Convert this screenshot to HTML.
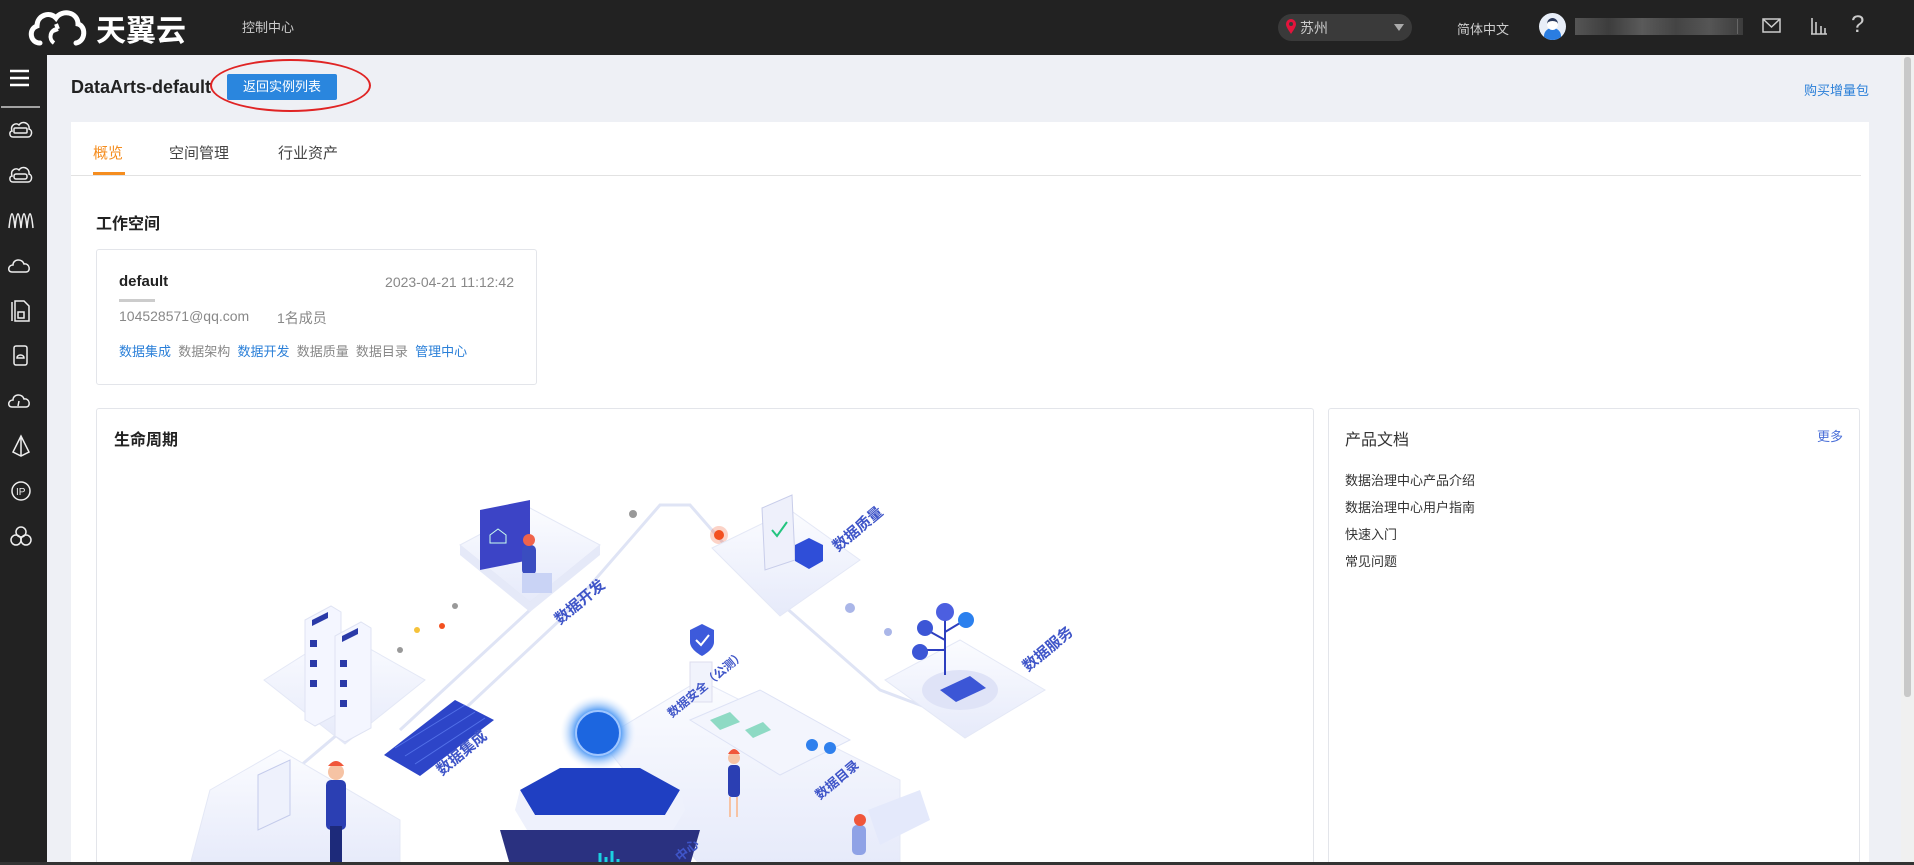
<!DOCTYPE html>
<html><head><meta charset="utf-8">
<style>
*{margin:0;padding:0;box-sizing:border-box}
body{width:1914px;height:865px;overflow:hidden;background:#eef0f5;font-family:"Liberation Sans","Noto Sans CJK SC",sans-serif;position:relative;color:#333}
.hdr{position:absolute;left:0;top:0;width:1914px;height:55px;background:#222}
.side{position:absolute;left:0;top:55px;width:47px;height:810px;background:#222}
.abs{position:absolute}
.panel{position:absolute;left:71px;top:122px;width:1798px;height:740px;background:#fff;overflow:hidden}
.card{position:absolute;border:1px solid #e3e5ea;border-radius:3px;background:#fff}
.lbl{font-family:"Noto Sans CJK SC",sans-serif;fill:#3f55c8;font-size:15px;font-weight:bold}
</style></head><body>
<div class="hdr">
  <svg class="abs" style="left:26px;top:5px" width="160" height="46" viewBox="0 0 160 46">
    <path d="M14 38 C4 38 2 24 11 21 C11 10 24 6 30 13 C36 4 52 7 52 19 C60 21 60 36 50 38" fill="none" stroke="#fff" stroke-width="5" stroke-linecap="round"/>
    <path d="M28 38 C22 34 24 24 32 24 M32 24 l-2 -5 M32 24 l-5 2" fill="none" stroke="#fff" stroke-width="4"/>
    <text x="70" y="36" fill="#fff" font-size="30" font-weight="bold" font-family="Noto Sans CJK SC,sans-serif">天翼云</text>
  </svg>
  <div class="abs" style="left:242px;top:17px;color:#ccc;font-size:13px">控制中心</div>
  <div class="abs" style="left:1278px;top:14px;width:134px;height:27px;border-radius:14px;background:#3a3a3a"></div>
  <svg class="abs" style="left:1285px;top:18px" width="12" height="17" viewBox="0 0 12 17"><path d="M6 16 C2 10 1 8 1 6 A5 5 0 0 1 11 6 C11 8 10 10 6 16Z" fill="#e4143c"/><circle cx="6" cy="6" r="2" fill="#3a3a3a"/></svg>
  <div class="abs" style="left:1300px;top:18px;color:#ccc;font-size:14px">苏州</div>
  <div class="abs" style="left:1394px;top:24px;width:0;height:0;border-left:5px solid transparent;border-right:5px solid transparent;border-top:7px solid #aaa"></div>
  <div class="abs" style="left:1457px;top:19px;color:#ccc;font-size:13px">简体中文</div>
  <div class="abs" style="left:1539px;top:13px;width:27px;height:27px;border-radius:50%;background:#e8eef8;overflow:hidden"><div style="position:absolute;left:5px;top:15px;width:17px;height:14px;border-radius:8px 8px 0 0;background:#2a7de1"></div><div style="position:absolute;left:8px;top:5px;width:11px;height:12px;border-radius:50%;background:#fff;border-top:3px solid #2b3a5c"></div></div>
  <div class="abs" style="left:1575px;top:18px;width:168px;height:17px;background:linear-gradient(90deg,#555,#3d3d3d,#5a5a5a,#444,#555,#3c3c3c)"></div>
  <div class="abs" style="left:1737px;top:19px;width:1px;height:15px;background:#666"></div>
  <svg class="abs" style="left:1762px;top:17px" width="20" height="18"><rect x="1" y="2" width="17" height="13" fill="none" stroke="#ccc" stroke-width="1.5"/><path d="M1 2 L9.5 10 L18 2" fill="none" stroke="#ccc" stroke-width="1.5"/></svg>
  <svg class="abs" style="left:1810px;top:16px" width="18" height="20"><path d="M2 2v16M6 6v12M11 10v8M15 12v6M1 18h16" stroke="#ccc" stroke-width="1.6" fill="none"/></svg>
  <div class="abs" style="left:1851px;top:11px;color:#ccc;font-size:24px">?</div>
</div>
<div class="side">
  <svg width="47" height="520" viewBox="0 0 47 520" fill="none" stroke="#eee" stroke-width="1.5">
    <path d="M10 16h19M10 23h19M10 30h19" stroke="#fff" stroke-width="2.5"/>
    <path d="M1 52h39" stroke="#ccc"/>
    <g transform="translate(0,64)"><path d="M12 12 C10 6 16 3 19 6 C22 1 30 4 29 10 C33 11 32 18 28 18 H13 C9 18 9 12 12 12Z"/><rect x="14" y="9" width="13" height="5" rx="1"/></g>
    <g transform="translate(0,109)"><path d="M12 12 C10 6 16 3 19 6 C22 1 30 4 29 10 C33 11 32 18 28 18 H13 C9 18 9 12 12 12Z"/><rect x="14" y="10" width="13" height="5" rx="2"/></g>
    <g transform="translate(0,154)"><path d="M9 19 C11 0 13 0 15 19 C17 0 19 0 21 19 C23 0 25 0 27 19 C29 0 31 0 33 19"/></g>
    <g transform="translate(0,199)"><path d="M12 18 C7 18 8 11 13 11 C13 5 22 4 24 10 C30 9 31 18 26 18Z"/></g>
    <g transform="translate(0,244)"><path d="M15 2h9l5 5v15H15z M12 3v19"/><rect x="18" y="13" width="6" height="6"/></g>
    <g transform="translate(0,289)"><rect x="14" y="2" width="13" height="19" rx="2"/><path d="M17 14 C17 10 24 10 24 14Z"/></g>
    <g transform="translate(0,334)"><path d="M12 18 C7 18 8 11 13 11 C13 5 22 4 24 10 C30 9 31 18 26 18Z M19 12 L18 17"/></g>
    <g transform="translate(0,379)"><path d="M21 2 L13 18 L21 22 L29 18Z M21 2V22"/></g>
    <g transform="translate(0,424)"><circle cx="21" cy="12" r="9"/><text x="16" y="16" font-size="10" fill="#eee" stroke="none">IP</text></g>
    <g transform="translate(0,469)"><circle cx="21" cy="8" r="5"/><circle cx="16" cy="16" r="5"/><circle cx="26" cy="16" r="5"/></g>
  </svg>
</div>
<div class="abs" style="left:1901px;top:55px;width:13px;height:808px;background:#f0f0f0"><div style="margin:2px 3px;width:7px;height:640px;background:#c8c8c8;border-radius:3px"></div></div>

<div class="abs" style="left:71px;top:77px;font-size:18px;font-weight:bold;color:#222">DataArts-default</div>
<div class="abs" style="left:227px;top:74px;width:110px;height:26px;background:#2a86de;color:#fff;font-size:13px;line-height:26px;text-align:center;border-radius:2px">返回实例列表</div>
<div class="abs" style="left:210px;top:59px;width:161px;height:53px;border:2px solid #e02424;border-radius:50%"></div>
<div class="abs" style="left:1804px;top:80px;color:#2a7fd8;font-size:13px">购买增量包</div>

<div class="panel">
  <div class="abs" style="left:22px;top:20px;font-size:15px;color:#f58d1f">概览</div>
  <div class="abs" style="left:22px;top:50px;width:32px;height:3px;background:#f58d1f"></div>
  <div class="abs" style="left:98px;top:20px;font-size:15px;color:#444">空间管理</div>
  <div class="abs" style="left:207px;top:20px;font-size:15px;color:#444">行业资产</div>
  <div class="abs" style="left:0;top:53px;width:1790px;height:1px;background:#e2e2e2"></div>
  <div class="abs" style="left:25px;top:88px;font-size:16px;font-weight:bold;color:#222">工作空间</div>
  <div class="card" style="left:25px;top:127px;width:441px;height:136px">
    <div class="abs" style="left:22px;top:23px;font-size:15px;font-weight:bold;color:#222">default</div>
    <div class="abs" style="right:22px;top:24px;font-size:14px;color:#888">2023-04-21 11:12:42</div>
    <div class="abs" style="left:22px;top:49px;width:36px;height:3px;background:#ccc"></div>
    <div class="abs" style="left:22px;top:58px;font-size:14px;color:#888">104528571@qq.com</div>
    <div class="abs" style="left:180px;top:58px;font-size:14px;color:#888">1名成员</div>
    <div class="abs" style="left:22px;top:91px;font-size:13px;color:#888;word-spacing:0"><span style="color:#2a7fd8">数据集成</span>&nbsp; 数据架构&nbsp; <span style="color:#2a7fd8">数据开发</span>&nbsp; 数据质量&nbsp; 数据目录&nbsp; <span style="color:#2a7fd8">管理中心</span></div>
  </div>
  <div class="card" style="left:25px;top:286px;width:1218px;height:470px">
    <div class="abs" style="left:17px;top:17px;font-size:16px;font-weight:bold;color:#222">生命周期</div>
  </div>
  <div class="card" style="left:1257px;top:286px;width:532px;height:470px">
    <div class="abs" style="left:16px;top:17px;font-size:16px;color:#333">产品文档</div>
    <div class="abs" style="right:16px;top:17px;font-size:13px;color:#4a6fd8">更多</div>
    <div class="abs" style="left:16px;top:58px;font-size:13px;color:#333;line-height:27px">数据治理中心产品介绍<br>数据治理中心用户指南<br>快速入门<br>常见问题</div>
  </div>
</div>

<svg class="abs" style="left:0;top:0" width="1314" height="862" viewBox="0 0 1314 862">
  <defs>
    <linearGradient id="pl" x1="0" y1="0" x2="0" y2="1"><stop offset="0" stop-color="#fbfcff"/><stop offset="1" stop-color="#e6eafa"/></linearGradient>
    <radialGradient id="gl"><stop offset="0" stop-color="#2c7cf0"/><stop offset=".6" stop-color="#5aa0f5"/><stop offset="1" stop-color="#e6f0ff" stop-opacity="0"/></radialGradient>
  </defs>
  <g stroke="#dfe4f5" stroke-width="3" fill="none">
    <path d="M410 760 L560 620 L660 505 L690 505 L760 585 L880 690 L960 720"/>
    <path d="M400 730 L530 610"/>
    <path d="M260 800 L390 690"/>
  </g>
  <circle cx="633" cy="514" r="4" fill="#999"/><circle cx="719" cy="535" r="5" fill="#f3501f"/><circle cx="719" cy="535" r="9" fill="#f3501f" opacity=".25"/>
  <circle cx="455" cy="606" r="3" fill="#999"/><circle cx="442" cy="626" r="3" fill="#f3501f"/><circle cx="417" cy="630" r="3" fill="#f5c23a"/><circle cx="400" cy="650" r="3" fill="#999"/>
  <circle cx="850" cy="608" r="5" fill="#aab6e8"/><circle cx="888" cy="632" r="4" fill="#aab6e8"/>
  <g fill="url(#pl)" stroke="#e4e8f6">
    <path d="M460 545 L530 508 L600 545 L530 602Z"/>
    <path d="M712 548 L790 510 L860 560 L780 616Z"/>
    <path d="M885 680 L960 640 L1045 690 L965 738Z"/>
    <path d="M264 680 L340 632 L425 680 L345 744Z"/>
    <path d="M600 740 L700 680 L900 780 L900 865 L700 865Z"/>
    <path d="M210 790 L280 750 L400 820 L400 865 L190 865Z"/>
  </g>
  <path d="M460 545 L530 602 L530 612 L460 555Z M530 602 L600 545 L600 555 L530 612Z" fill="#e5e9f8"/>
  <path d="M480 510 L530 500 L530 560 L480 570Z" fill="#3c44c6"/><path d="M490 535 l8-6 l8 6 v8 h-16z" stroke="#cfe" fill="none"/>
  <rect x="522" y="545" width="14" height="30" rx="5" fill="#3a4dc0"/><circle cx="529" cy="540" r="6" fill="#f0634a"/>
  <rect x="522" y="573" width="30" height="20" fill="#c9d3f5"/>
  <path d="M762 508 L792 495 L795 560 L765 570Z" fill="#eef0fb" stroke="#c8cdea"/><path d="M772 530 l5 6 l10 -14" stroke="#23c47f" stroke-width="2" fill="none"/>
  <path d="M795 545 l14 -7 l14 7 v16 l-14 8 l-14-8z" fill="#2f4ed8"/>
  <ellipse cx="960" cy="690" rx="38" ry="20" fill="#dfe3f7"/>
  <path d="M940 690 l30 -14 l16 12 l-30 14z" fill="#3c56d6"/>
  <path d="M945 675 V620 M945 640 l-18 -10 M945 632 l20 -12 M945 650 l-22 0" stroke="#2d3fbf" stroke-width="2" fill="none"/>
  <circle cx="925" cy="628" r="8" fill="#3c56d6"/><circle cx="945" cy="612" r="9" fill="#4c5fe0"/><circle cx="966" cy="620" r="8" fill="#2b80ee"/><circle cx="920" cy="652" r="8" fill="#3c56d6"/>
  <g fill="#f4f6ff" stroke="#dfe3f3">
    <path d="M305 620 l26 -14 l10 6 v100 l-26 14 l-10 -6z"/>
    <path d="M335 636 l26 -14 l10 6 v100 l-26 14 l-10 -6z"/>
  </g>
  <g fill="#2a3aa8"><rect x="310" y="640" width="7" height="7"/><rect x="310" y="660" width="7" height="7"/><rect x="310" y="680" width="7" height="7"/><rect x="340" y="660" width="7" height="7"/><rect x="340" y="680" width="7" height="7"/><rect x="340" y="700" width="7" height="7"/><path d="M312 620 l16 -8 v6 l-16 8z"/><path d="M342 636 l16 -8 v6 l-16 8z"/></g>
  <path d="M384 755 L455 700 L494 720 L420 776Z" fill="#2d45c8"/>
  <path d="M395 748 L465 705 M405 756 L475 712 M415 764 L485 718" stroke="#5270e8" stroke-width="1"/>
  <circle cx="598" cy="733" r="38" fill="url(#gl)"/>
  <circle cx="598" cy="733" r="22" fill="#1c66e0" stroke="#9fc6ff" stroke-width="2"/>
  <path d="M520 790 L560 768 L640 768 L680 790 L665 815 L535 815Z" fill="#1f3fc2"/>
  <path d="M535 815 L665 815 L680 790 L685 810 L670 835 L530 835 L515 810 L520 790Z" fill="#eef1fc"/>
  <path d="M500 830 L700 830 L690 865 L510 865Z" fill="#2a3180"/>
  <path d="M600 865 v-12 M606 865 v-8 M612 865 v-14 M618 865 v-6" stroke="#1bd1e0" stroke-width="3"/>
  <path d="M690 630 l12 -6 l12 6 v12 c0 8 -12 14 -12 14 c0 0 -12 -6 -12 -14z" fill="#3d5adb"/>
  <path d="M696 640 l5 5 l8 -10" stroke="#fff" stroke-width="2" fill="none"/>
  <rect x="690" y="662" width="22" height="40" fill="#f1f3fc" stroke="#dde"/>
  <path d="M690 720 L760 690 L850 740 L780 775Z" fill="#f3f5fd" stroke="#dde2f5"/>
  <path d="M710 720 l20 -8 l10 10 l-20 8z M745 730 l18 -8 l8 8 l-18 8z" fill="#29c08c" opacity=".5"/>
  <circle cx="812" cy="745" r="6" fill="#2f80ed"/><circle cx="830" cy="748" r="6" fill="#2f80ed"/>
  <rect x="326" y="780" width="20" height="50" rx="5" fill="#2b3fb3"/><rect x="330" y="826" width="12" height="39" fill="#1d2a7a"/><circle cx="336" cy="772" r="8" fill="#f6c3a4"/><path d="M328 766 q8 -10 16 0" fill="#f0563a"/>
  <path d="M258 775 L290 760 L290 815 L258 830Z" fill="#eef1fc" stroke="#c4cbeb"/>
  <rect x="728" y="765" width="12" height="32" rx="4" fill="#2b3fb3"/><circle cx="734" cy="758" r="6" fill="#f6c3a4"/><path d="M728 754 q6 -10 12 0" fill="#f0563a"/><path d="M730 797 v20 M737 797 v20" stroke="#f6c3a4" stroke-width="2"/>
  <rect x="852" y="825" width="14" height="30" rx="5" fill="#8fa2e6"/><circle cx="860" cy="820" r="6" fill="#f0563a"/>
  <path d="M868 810 L920 790 L930 820 L880 845Z" fill="#e4e9fb"/>
  <text class="lbl" transform="translate(560 625) rotate(-40)">数据开发</text>
  <text class="lbl" transform="translate(838 552) rotate(-40)">数据质量</text>
  <text class="lbl" transform="translate(1028 672) rotate(-40)">数据服务</text>
  <text class="lbl" transform="translate(442 776) rotate(-40)">数据集成</text>
  <text class="lbl" style="font-size:12px" transform="translate(672 718) rotate(-40)">数据安全（公测）</text>
  <text class="lbl" style="font-size:13px" transform="translate(820 800) rotate(-40)">数据目录</text>
  <text class="lbl" style="font-size:13px" transform="translate(680 862) rotate(-40)">中心</text>
</svg>
<div class="abs" style="left:0;top:862px;width:1914px;height:3px;background:#333"></div>
</body></html>
